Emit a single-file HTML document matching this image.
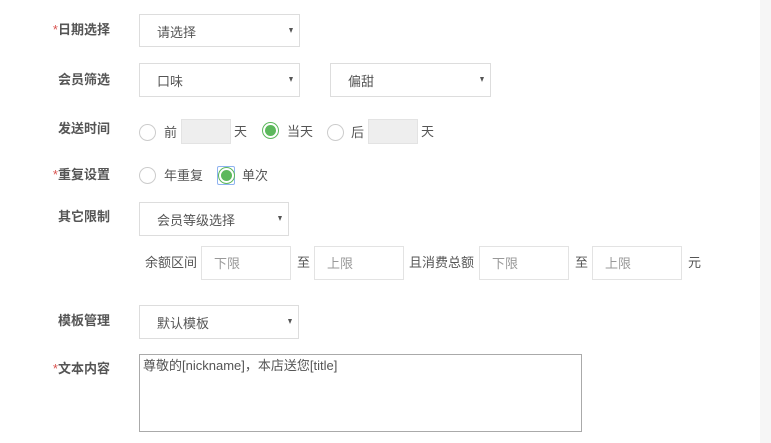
<!DOCTYPE html>
<html><head><meta charset="utf-8"><style>
*{margin:0;padding:0;box-sizing:border-box}
body{width:771px;height:443px;background:#fff;position:relative;overflow:hidden;font-family:"Liberation Sans","Noto Sans CJK SC",sans-serif;font-size:13px;color:#555}
.a{position:absolute;white-space:nowrap}
.lbl{position:absolute;width:110px;text-align:right;font-weight:bold;color:#555;font-size:13px;line-height:18px}
.lbl i{color:#d9534f;font-style:normal;font-weight:normal}
.sel{position:absolute;border:1px solid #ddd;background:#fff;color:#555;padding-left:17px;padding-top:2px;line-height:31px;font-size:13px}
.sel:after{content:"";position:absolute;right:6px;top:13px;border-left:2.5px solid transparent;border-right:2.5px solid transparent;border-top:5px solid #555}
.rad{position:absolute;width:17px;height:17px;border:1px solid #ccc;border-radius:50%;background:#fff}
.rad.on{border-color:#5cb85c}
.rad.on:after{content:"";position:absolute;left:2px;top:2px;width:11px;height:11px;border-radius:50%;background:#5cb85c}
.gin{position:absolute;background:#eee;border:1px solid #e3e3e3}
.inp{position:absolute;border:1px solid #e3e3e3;background:#fff;color:#999;padding-left:12px;line-height:33px}
.t{position:absolute;line-height:18px}
</style></head><body>
<div class="a" style="left:760px;top:0;width:11px;height:443px;background:#f6f6f6"></div>

<div class="lbl" style="top:21px;left:0"><i>*</i>日期选择</div>
<div class="sel" style="left:139px;top:14px;width:161px;height:33px">请选择</div>

<div class="lbl" style="top:71px;left:0">会员筛选</div>
<div class="sel" style="left:139px;top:63px;width:161px;height:34px">口味</div>
<div class="sel" style="left:330px;top:63px;width:161px;height:34px">偏甜</div>

<div class="lbl" style="top:120px;left:0">发送时间</div>
<div class="rad" style="left:139px;top:124px"></div>
<div class="t" style="left:164px;top:124px">前</div>
<div class="gin" style="left:181px;top:119px;width:50px;height:25px"></div>
<div class="t" style="left:234px;top:123px">天</div>
<div class="rad on" style="left:262px;top:122px"></div>
<div class="t" style="left:287px;top:123px">当天</div>
<div class="rad" style="left:327px;top:124px"></div>
<div class="t" style="left:351px;top:124px">后</div>
<div class="gin" style="left:368px;top:119px;width:50px;height:25px"></div>
<div class="t" style="left:421px;top:123px">天</div>

<div class="lbl" style="top:166px;left:0"><i>*</i>重复设置</div>
<div class="rad" style="left:139px;top:167px"></div>
<div class="t" style="left:164px;top:167px">年重复</div>
<div class="a" style="left:217px;top:166px;width:18px;height:19px;border:1px solid #8fb3f0;border-radius:2px"></div>
<div class="rad on" style="left:218px;top:167px"></div>
<div class="t" style="left:242px;top:167px">单次</div>

<div class="lbl" style="top:208px;left:0">其它限制</div>
<div class="sel" style="left:139px;top:202px;width:150px;height:34px">会员等级选择</div>

<div class="t" style="left:145px;top:254px">余额区间</div>
<div class="inp" style="left:201px;top:246px;width:90px;height:34px">下限</div>
<div class="t" style="left:297px;top:254px">至</div>
<div class="inp" style="left:314px;top:246px;width:90px;height:34px">上限</div>
<div class="t" style="left:409px;top:254px">且消费总额</div>
<div class="inp" style="left:479px;top:246px;width:90px;height:34px">下限</div>
<div class="t" style="left:575px;top:254px">至</div>
<div class="inp" style="left:592px;top:246px;width:90px;height:34px">上限</div>
<div class="t" style="left:688px;top:254px">元</div>

<div class="lbl" style="top:312px;left:0">模板管理</div>
<div class="sel" style="left:139px;top:305px;width:160px;height:34px">默认模板</div>

<div class="lbl" style="top:360px;left:0"><i>*</i>文本内容</div>
<div class="a" style="left:139px;top:354px;width:443px;height:78px;border:1px solid #aaa;padding:2px 3px;line-height:18px;color:#555">尊敬的[nickname]，本店送您[title]</div>
</body></html>
